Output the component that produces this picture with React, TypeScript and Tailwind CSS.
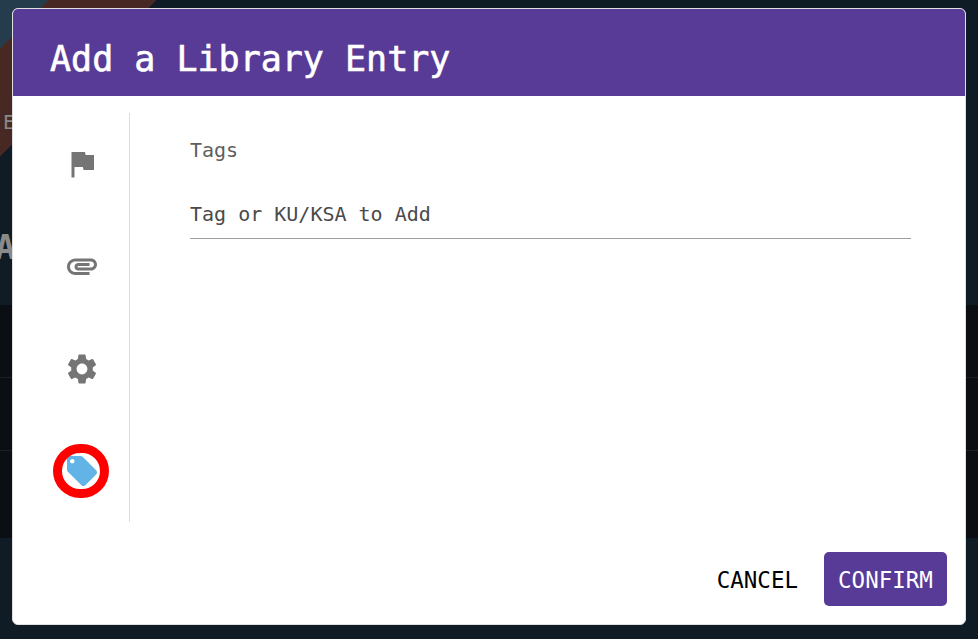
const Icon = ({ d, className }: { d: string; className: string }) => (
  <svg viewBox="0 0 24 24" className={className} fill="currentColor">
    <path d={d} />
  </svg>
);

const flag = "M14.4 6L14 4H5v17h2v-7h5.6l.4 2h7V6z";
const clip =
  "M2 12.5C2 9.46 4.46 7 7.5 7H18c2.21 0 4 1.79 4 4s-1.79 4-4 4H9.5C8.12 15 7 13.88 7 12.5S8.12 10 9.5 10H17v2H9.41c-.55 0-.55 1 0 1H18c1.1 0 2-.9 2-2s-.9-2-2-2H7.5C5.57 9 4 10.57 4 12.5S5.57 16 7.5 16H17v2H7.5C4.46 18 2 15.54 2 12.5z";
const gear =
  "M19.14 12.94c.04-.3.06-.61.06-.94 0-.32-.02-.64-.07-.94l2.03-1.58c.18-.14.23-.41.12-.61l-1.92-3.32c-.12-.22-.37-.29-.59-.22l-2.39.96c-.5-.38-1.03-.7-1.62-.94l-.36-2.54c-.04-.24-.24-.41-.48-.41h-3.84c-.24 0-.43.17-.47.41l-.36 2.54c-.59.24-1.13.57-1.62.94l-2.39-.96c-.22-.08-.47 0-.59.22L2.74 8.87c-.12.21-.08.47.12.61l2.03 1.58c-.05.3-.09.63-.09.94s.02.64.07.94l-2.03 1.58c-.18.14-.23.41-.12.61l1.92 3.32c.12.22.37.29.59.22l2.39-.96c.5.38 1.03.7 1.62.94l.36 2.54c.05.24.24.41.48.41h3.84c.24 0 .44-.17.47-.41l.36-2.54c.59-.24 1.13-.56 1.62-.94l2.39.96c.22.08.47 0 .59-.22l1.92-3.32c.12-.22.07-.47-.12-.61l-2.01-1.58zM12 15.6c-1.98 0-3.6-1.62-3.6-3.6s1.62-3.6 3.6-3.6 3.6 1.62 3.6 3.6-1.62 3.6-3.6 3.6z";
const tag =
  "M21.41 11.58l-9-9C12.05 2.22 11.55 2 11 2H4c-1.1 0-2 .9-2 2v7c0 .55.22 1.05.59 1.42l9 9c.36.36.86.58 1.41.58.55 0 1.05-.22 1.41-.59l7-7c.37-.36.59-.86.59-1.41 0-.55-.23-1.06-.59-1.42zM5.5 7C4.67 7 4 6.33 4 5.5S4.67 4 5.5 4 7 4.67 7 5.5 6.33 7 5.5 7z";

export default function App() {
  return (
    <div className="relative h-[639px] w-[978px] overflow-hidden bg-[#101c25] font-['DejaVu_Sans_Mono',monospace]">
      {/* Dimmed page behind the dialog */}
      <div className="flex h-[305px] flex-col bg-[linear-gradient(135deg,#243c4c_34px,#472822_34px,#472822_111px,#101c25_111px)] pl-[3px] pt-[111px]">
        <div className="text-[20px] leading-[22px] text-[#8a8a8a]">E</div>
        <div className="mt-[94px] -ml-[8px] text-[34px] font-bold leading-[40px] text-[#8a8a8a]">A</div>
      </div>
      <div className="flex h-[233px] flex-col bg-[#0b0e12]">
        <div className="h-[73px] border-b border-[#1c2024]" />
        <div className="h-[73px] border-b border-[#1c2024]" />
      </div>

      {/* Dialog */}
      <div className="absolute left-[12px] top-[8px] flex h-[617px] w-[954px] flex-col overflow-hidden rounded-[6px] border border-[#e0e0e0] bg-white">
        <div className="flex h-[87px] shrink-0 items-center bg-[#583b96] pl-[37px] pt-[14px]">
          <h1 className="text-[35px] leading-none text-white [-webkit-text-stroke:0.6px_white]">Add a Library Entry</h1>
        </div>

        <div className="flex h-[426px] pt-[17px]">
          <div className="flex w-[117px] flex-col border-r border-[#dddddd] text-[#757575]">
            <div className="flex flex-1 items-center pl-[51px]">
              <Icon d={flag} className="h-[36px] w-[36px] shrink-0" />
            </div>
            <div className="flex flex-1 items-center pl-[51px]">
              <Icon d={clip} className="h-[36px] w-[36px] shrink-0" />
            </div>
            <div className="flex flex-1 items-center pl-[51px]">
              <Icon d={gear} className="h-[36px] w-[36px] shrink-0" />
            </div>
            <div className="relative flex flex-1 items-center pl-[51px] text-[#62b3e6]">
              <Icon d={tag} className="h-[36px] w-[36px] shrink-0" />
              <div className="absolute left-[40px] top-[24px] h-[54px] w-[56px] rounded-full border-[9px] border-[#ff0000]" />
            </div>
          </div>

          <div className="flex-1 pl-[60px] pr-[54px]">
            <div className="pt-[25px] text-[20px] leading-[24px] text-[#5f5f5f]">Tags</div>
            <div className="mt-[40px] border-b border-[#9e9e9e] pb-[12px] text-[20px] leading-[24px] text-[#4a4a4a]">
              Tag or KU/KSA to Add
            </div>
          </div>
        </div>

        <div className="flex flex-1 items-start justify-end gap-[14px] pr-[18px] pt-[30px]">
          <button className="h-[54px] rounded-[5px] px-[12px] pt-[3px] text-[22.5px] text-black">CANCEL</button>
          <button className="h-[54px] w-[123px] rounded-[5px] bg-[#583b96] pt-[3px] text-[22.5px] text-white">CONFIRM</button>
        </div>
      </div>
    </div>
  );
}
